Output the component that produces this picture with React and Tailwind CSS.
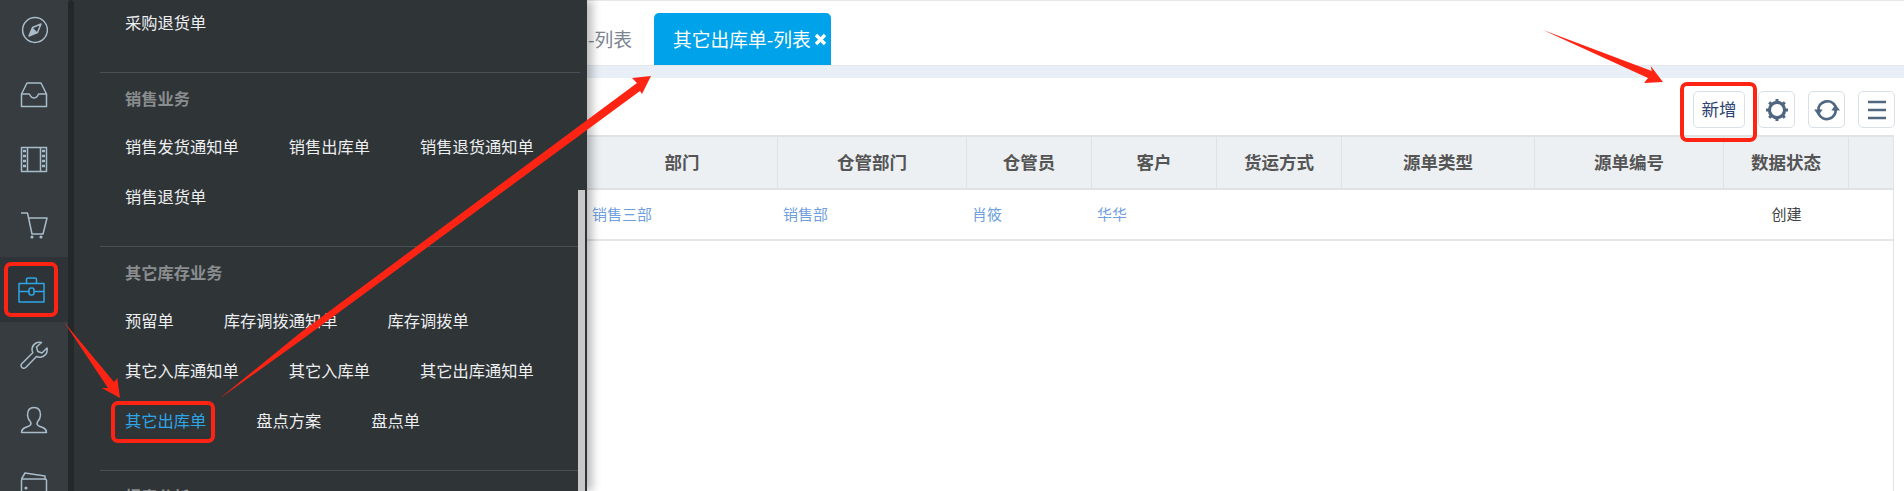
import React from "react";

const FONT = "font-['Microsoft_YaHei','Noto_Sans_CJK_SC','Noto_Sans',sans-serif]";

// rail icons, all on a 28 box
const railIcons = [
  <>
    <circle cx="15" cy="14" r="12.4" />
    <path d="M21 8 L17.5 16.5 L9 20 L12.5 11.5 Z" />
    <path d="M12.5 11.5 L17.5 16.5 L9 20 Z" fill="currentColor" stroke="none" />
  </>,
  <>
    <path d="M7 2 H21 L26.5 13 V25.5 H1.5 V13 Z" />
    <path d="M1.5 13 H9 C10 13 10 14 10.5 15 C11.5 17.5 16.5 17.5 17.5 15 C18 14 18 13 19 13 H26.5" />
  </>,
  <>
    <rect x="1.5" y="1.5" width="25" height="24" />
    <path d="M7.5 1.5 V25.5 M20.5 1.5 V25.5" />
    <path d="M3 5 H6 M3 10 H6 M3 15 H6 M3 20 H6 M22 5 H25 M22 10 H25 M22 15 H25 M22 20 H25" strokeWidth="2.4" />
  </>,
  <>
    <path d="M1 2 H7.5 L12 23 H23 L27 7 H9" />
    <circle cx="12" cy="26" r="1.6" fill="currentColor" stroke="none" />
    <circle cx="21" cy="26" r="1.6" fill="currentColor" stroke="none" />
  </>,
  <>
    <rect x="1" y="7.5" width="25" height="18.5" />
    <path d="M8.5 7.5 V3.5 C8.5 2.5 9.5 2 10.5 2 H16.5 C17.5 2 18.5 2.5 18.5 3.5 V7.5" />
    <path d="M1 15.5 H11 M16 15.5 H26" />
    <rect x="11" y="12" width="5" height="7" rx="2" />
  </>,
  <>
    <path d="M27 7 L22 12 L17.8 10.5 L16.5 6 L21.5 1.5 C17 0.5 12.5 3 12 8 C12 9.5 12.2 10.5 12.8 11.8 L2 22.5 C0.5 24 1 25.5 2 26.5 C3 27.5 4.5 27.7 6 26.2 L16.5 15.5 C18 16.2 19 16.4 20.5 16.2 C25 15.6 28 12 27 7 Z" />
  </>,
  <>
    <path d="M14 1.5 C9.5 1.5 7.5 5 7.5 9 C7.5 12.5 9.5 15 10.8 16.5 C11.5 18.5 10.5 19.5 8.5 20.3 C5 21.5 1.5 22.5 1.5 26.5 H26.5 C26.5 22.5 23 21.5 19.5 20.3 C17.5 19.5 16.5 18.5 17.2 16.5 C18.5 15 20.5 12.5 20.5 9 C20.5 5 18.5 1.5 14 1.5 Z" />
  </>,
  <>
    <path d="M1.5 8 L5 2 L25 5 V9" />
    <rect x="1.5" y="8" width="25" height="18" rx="1.5" />
    <circle cx="6" cy="17" r="1.6" fill="currentColor" stroke="none" />
  </>,
];

function RailItem({ icon, active }) {
  return (
    <div className={`h-[65px] w-[74px] flex items-center ${active ? "bg-[#2e3337] text-[#2ea6e6]" : "text-[#a8bcc9]"}`}>
      <div className={`w-[68px] flex justify-center ${active ? "pr-[4px]" : ""}`}>
        <svg width="28" height="28" viewBox="0 0 28 28" fill="none" stroke="currentColor" strokeWidth="1.5" strokeLinejoin="round">
          {icon}
        </svg>
      </div>
    </div>
  );
}

function MenuItem({ label, active }) {
  return (
    <div className={`px-[25px] h-[50px] leading-[49px] text-[16.25px] ${active ? "text-[#2ea6e6]" : "text-[#eceeef]"}`}>
      {label}
    </div>
  );
}

function MenuRow({ items, activeItem }) {
  return (
    <div className="flex">
      {items.map((label) => (
        <MenuItem key={label} label={label} active={label === activeItem} />
      ))}
    </div>
  );
}

function SectionHead({ title }) {
  return (
    <div className="h-[49px] leading-[50px] pl-[25px] text-[16.25px] font-bold text-[#8a8d8f]">{title}</div>
  );
}

const columns = [
  { title: "部门", value: "销售三部" },
  { title: "仓管部门", value: "销售部" },
  { title: "仓管员", value: "肖筱" },
  { title: "客户", value: "华华" },
  { title: "货运方式", value: "" },
  { title: "源单类型", value: "" },
  { title: "源单编号", value: "" },
  { title: "数据状态", value: "创建", center: true, plain: true },
  { title: "", value: "" },
];

const GRID = "grid grid-cols-[191px_189px_125px_125px_125px_193px_189px_125px_45px]";

function ToolButton({ children, wide }) {
  return (
    <button className={`h-[37px] ${wide ? "w-[52px]" : "w-[37px]"} flex items-center justify-center rounded-[5px] border border-[#d9e0e8] bg-white text-[17.5px] text-[#2c4370]`}>
      {children}
    </button>
  );
}

export default function App() {
  return (
    <div className={`relative flex h-[491px] w-[1904px] overflow-hidden bg-white ${FONT}`}>
      {/* left nav */}
      <div className="relative z-10 flex shrink-0 shadow-[5px_0_9px_rgba(0,0,0,0.28)]">
        <div className="relative w-[74px] bg-[#363c40] -mt-[3px] overflow-hidden">
          {railIcons.map((icon, i) => (
            <RailItem key={i} icon={icon} active={i === 4} />
          ))}
          <div className="absolute left-[68px] top-[3px] bottom-0 w-[6px] rounded-t-[3px] bg-[#23282b]" />
        </div>

        <div className="relative w-[513px] bg-[#2f3437] -mt-[2px] pl-[26px] pr-[7px] overflow-hidden">
          <MenuRow items={["采购退货单"]} />
          <div className="mt-[24px] border-t border-[#4a4f53]">
            <SectionHead title="销售业务" />
            <MenuRow items={["销售发货通知单", "销售出库单", "销售退货通知单"]} />
            <MenuRow items={["销售退货单"]} />
          </div>
          <div className="mt-[24px] border-t border-[#4a4f53]">
            <SectionHead title="其它库存业务" />
            <MenuRow items={["预留单", "库存调拨通知单", "库存调拨单"]} />
            <MenuRow items={["其它入库通知单", "其它入库单", "其它出库通知单"]} />
            <MenuRow items={["其它出库单", "盘点方案", "盘点单"]} activeItem="其它出库单" />
          </div>
          <div className="mt-[24px] border-t border-[#4a4f53]">
            <SectionHead title="报表分析" />
          </div>
          <div className="absolute right-[2px] top-[192px] bottom-0 w-[7px] bg-[#c8c8c8]" />
        </div>
      </div>

      {/* main */}
      <div className="flex-1 min-w-0 flex flex-col border-t border-[#e7e7e7]">
        <div className="h-[64px] flex items-end">
          <div className="h-[52px] w-[67px] pl-[1px] flex items-center text-[18.75px] text-[#7b8591]">-列表</div>
          <div className="h-[52px] w-[177px] pl-[19px] rounded-t-[5px] bg-[#00a2e9] flex items-center text-[18.75px] text-white">
            <span>其它出库单-列表</span>
            <svg className="ml-[3px]" width="13" height="13" viewBox="0 0 13 13" stroke="white" strokeWidth="3.4">
              <path d="M2 2 L11 11 M11 2 L2 11" />
            </svg>
          </div>
        </div>
        <div className="h-[13px] border-t border-[#e3e7ec] bg-[#e9eff7]" />

        <div className="flex justify-end gap-[13px] pr-[9px] pt-[13px] pb-[7px]">
          <ToolButton wide>新增</ToolButton>
          <ToolButton>
            <svg width="26" height="26" viewBox="0 0 26 26" fill="none" stroke="#4f6780">
              <circle cx="13" cy="13" r="7.6" strokeWidth="3.2" />
              <path d="M13 2 V5.5 M13 20.5 V24 M2 13 H5.5 M20.5 13 H24 M5.2 5.2 L7.6 7.6 M18.4 18.4 L20.8 20.8 M5.2 20.8 L7.6 18.4 M18.4 7.6 L20.8 5.2" strokeWidth="3" />
            </svg>
          </ToolButton>
          <ToolButton>
            <svg width="28" height="28" viewBox="0 0 26 26" fill="none" stroke="#4f6780" strokeWidth="2.6">
              <path d="M5 14 C4 5 17 1 21 10" />
              <path d="M21 12 C22 22 9 25 5 16" />
              <path d="M1 12.5 H9 L5 18 Z M17 13.5 H25 L21 8 Z" fill="#4f6780" stroke="none" />
            </svg>
          </ToolButton>
          <ToolButton>
            <svg width="20" height="20" viewBox="0 0 20 20" fill="none" stroke="#4f6780" strokeWidth="2.6">
              <path d="M1 2 H19 M1 10 H19 M1 18 H19" />
            </svg>
          </ToolButton>
        </div>

        <div className="flex-1 w-[1307px] border-r border-[#e0e3e6]">
          <div className={`${GRID} h-[55px] border-y-2 border-[#e0e3e6] bg-[#ecf0f3]`}>
            {columns.map((c, i) => (
              <div key={i} className={`flex items-center justify-center text-[17.5px] font-bold text-[#555] ${i < columns.length - 1 ? "border-r border-[#e0e3e6]" : ""}`}>
                {c.title}
              </div>
            ))}
          </div>
          <div className={`${GRID} h-[51px] border-b-2 border-[#e4e6e8]`}>
            {columns.map((c, i) => (
              <div key={i} className={`flex items-center text-[15px] px-[5px] ${c.center ? "justify-center" : ""} ${c.plain ? "text-[#444]" : "text-[#6f9fdc]"}`}>
                {c.value}
              </div>
            ))}
          </div>
        </div>
      </div>

      {/* red annotations drawn on the screenshot */}
      <div className="absolute left-[4px] top-[262px] h-[55px] w-[54px] rounded-[7px] border-[4px] border-[#fe2414] z-20" />
      <div className="absolute left-[111px] top-[401px] h-[42px] w-[104px] rounded-[7px] border-[4px] border-[#fe2414] z-20" />
      <div className="absolute left-[1680px] top-[82px] h-[60px] w-[77px] rounded-[7px] border-[4px] border-[#fe2414] z-20" />
      <svg className="absolute inset-0 z-20 pointer-events-none" width="1904" height="491" fill="#fe2414">
        <polygon points="64,322 114,382 117.3,378 120,398 101.7,388 108,388" />
        <polygon points="219,399 300,333 637,83 632,78 651,76 642,94 640,91 300,341" />
        <polygon points="1543,30 1651.7,71 1650.7,66 1663,82 1644,83 1648,78" />
      </svg>
    </div>
  );
}
